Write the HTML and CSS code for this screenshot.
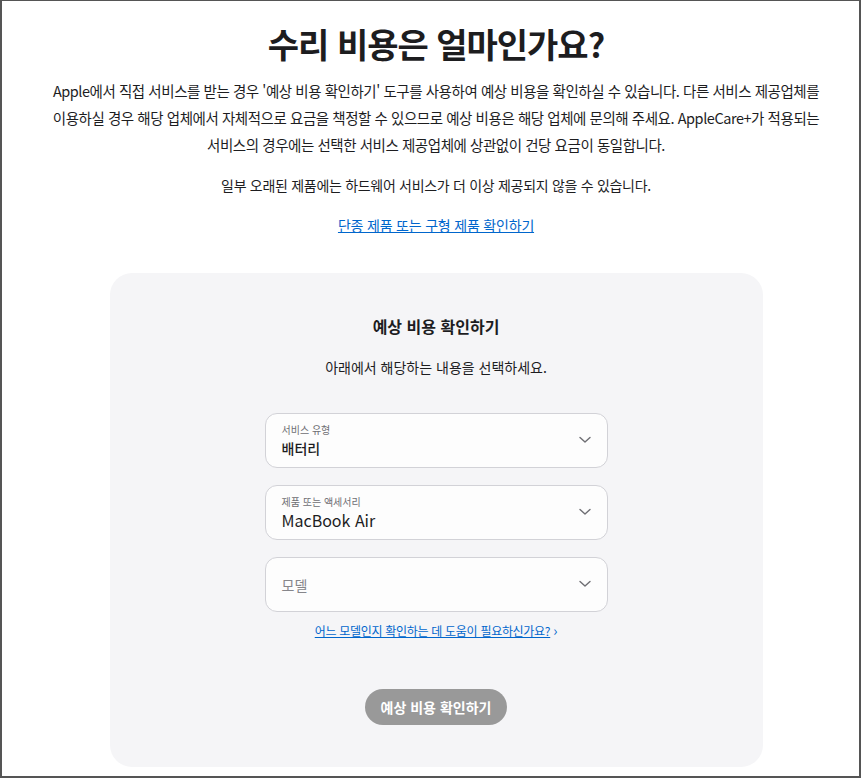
FILE: index.html
```html
<!DOCTYPE html>
<html lang="ko">
<head>
<meta charset="utf-8">
<link rel="stylesheet" href="styles.css">
</head>
<body>
<div class="frame">
  <main class="page">
    <h1 class="title">수리 비용은 얼마인가요?</h1>
    <p class="intro">Apple에서 직접 서비스를 받는 경우 '예상 비용 확인하기' 도구를 사용하여 예상 비용을 확인하실 수 있습니다. 다른 서비스 제공업체를<br>이용하실 경우 해당 업체에서 자체적으로 요금을 책정할 수 있으므로 예상 비용은 해당 업체에 문의해 주세요. AppleCare+가 적용되는<br>서비스의 경우에는 선택한 서비스 제공업체에 상관없이 건당 요금이 동일합니다.</p>
    <p class="note">일부 오래된 제품에는 하드웨어 서비스가 더 이상 제공되지 않을 수 있습니다.</p>
    <a class="link" href="#">단종 제품 또는 구형 제품 확인하기</a>

    <section class="card">
      <h2 class="card-title">예상 비용 확인하기</h2>
      <p class="card-sub">아래에서 해당하는 내용을 선택하세요.</p>
      <div class="fields">
        <div class="select">
          <div class="select-text">
            <span class="select-label">서비스 유형</span>
            <span class="select-value">배터리</span>
          </div>
          <svg class="chev" width="12" height="8" viewBox="0 0 12 8"><path d="M1 1.5 L6 6 L11 1.5" fill="none" stroke="#6e6e73" stroke-width="1.4" stroke-linecap="round" stroke-linejoin="round"/></svg>
        </div>
        <div class="select">
          <div class="select-text">
            <span class="select-label">제품 또는 액세서리</span>
            <span class="select-value value-lg">MacBook Air</span>
          </div>
          <svg class="chev" width="12" height="8" viewBox="0 0 12 8"><path d="M1 1.5 L6 6 L11 1.5" fill="none" stroke="#6e6e73" stroke-width="1.4" stroke-linecap="round" stroke-linejoin="round"/></svg>
        </div>
        <div class="select">
          <div class="select-text">
            <span class="select-placeholder">모델</span>
          </div>
          <svg class="chev" width="12" height="8" viewBox="0 0 12 8"><path d="M1 1.5 L6 6 L11 1.5" fill="none" stroke="#6e6e73" stroke-width="1.4" stroke-linecap="round" stroke-linejoin="round"/></svg>
        </div>
      </div>
      <a class="help" href="#"><span class="help-text">어느 모델인지 확인하는 데 도움이 필요하신가요?</span> <span class="help-arrow">›</span></a>
      <button class="btn" type="button">예상 비용 확인하기</button>
    </section>
  </main>
</div>
</body>
</html>
```

FILE: styles.css
```css
* { box-sizing: border-box; }
html, body { margin: 0; padding: 0; }
body {
  font-family: "Noto Sans CJK KR", "Noto Sans", sans-serif;
  color: #1d1d1f;
  background: #fff;
}
.frame {
  width: 861px;
  height: 778px;
  border: 1px solid #555;
  border-left-width: 2px;
  border-right-width: 2px;
  border-bottom-width: 2px;
  overflow: hidden;
}
.page {
  display: flex;
  flex-direction: column;
  align-items: center;
  padding-top: 19px;
  padding-left: 11px;
}
.title {
  margin: 0;
  font-size: 34px;
  font-weight: 700;
  line-height: 48px;
  letter-spacing: -1px;
}
.intro {
  margin: 9px 0 0;
  text-align: center;
  font-size: 14.5px;
  line-height: 27px;
  letter-spacing: -0.45px;
  white-space: nowrap;
}
.note {
  margin: 14px 0 0;
  font-size: 14px;
  line-height: 27px;
  letter-spacing: -0.3px;
}
.link {
  margin-top: 13px;
  font-size: 14px;
  line-height: 27px;
  color: #0066cc;
  text-decoration: underline;
  letter-spacing: -0.2px;
}
.card {
  margin-top: 34px;
  width: 653px;
  height: 494px;
  background: #f5f5f7;
  border-radius: 22px;
  display: flex;
  flex-direction: column;
  align-items: center;
  padding-top: 40px;
}
.card-title {
  margin: 0;
  font-size: 16px;
  font-weight: 700;
  line-height: 26px;
}
.card-sub {
  margin: 16px 0 0;
  font-size: 14px;
  line-height: 24px;
}
.fields {
  margin-top: 34px;
  display: flex;
  flex-direction: column;
  gap: 17px;
  width: 343px;
}
.select {
  height: 55px;
  background: #fdfdfd;
  border: 1px solid #d2d2d7;
  border-radius: 12px;
  display: flex;
  align-items: center;
  justify-content: space-between;
  padding: 0 16px 0 16px;
}
.select-text {
  display: flex;
  flex-direction: column;
}
.select-label {
  font-size: 10px;
  line-height: 14px;
  color: #6e6e73;
}
.select-value {
  font-size: 14px;
  line-height: 22px;
  font-weight: 500;
  color: #1d1d1f;
}
.value-lg {
  font-size: 16px;
  font-weight: 400;
}
.select-placeholder {
  font-size: 14px;
  color: #86868b;
}
.chev { flex: none; margin-top: -2px; }
.help {
  margin-top: 9px;
  font-size: 12px;
  line-height: 18px;
  color: #0066cc;
  text-decoration: none;
  letter-spacing: -0.3px;
}
.help-text { text-decoration: underline; }
.help-arrow { font-size: 14px; }
.btn {
  margin-top: 49px;
  width: 142px;
  height: 36px;
  border: 0;
  border-radius: 18px;
  background: #999999;
  color: #fff;
  font-family: inherit;
  font-size: 14px;
  font-weight: 700;
}
```
